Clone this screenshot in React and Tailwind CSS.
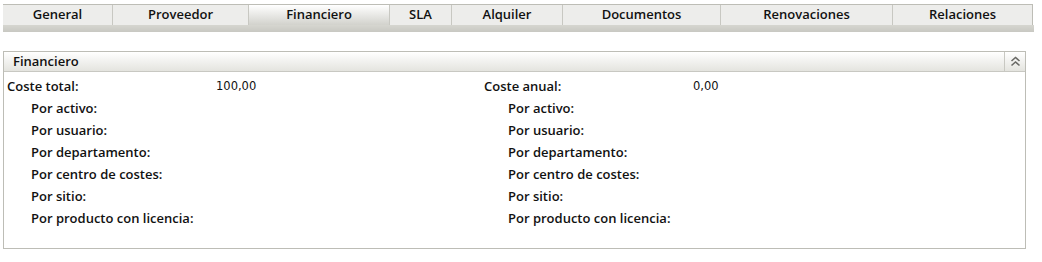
const tabs = [
  { name: "General", w: "w-[109px]" },
  { name: "Proveedor", w: "w-[136px]" },
  { name: "Financiero", w: "w-[141px]", active: true },
  { name: "SLA", w: "w-[62px]" },
  { name: "Alquiler", w: "w-[111px]" },
  { name: "Documentos", w: "w-[158px]" },
  { name: "Renovaciones", w: "w-[172px]" },
  { name: "Relaciones", w: "w-[140px]" },
];

const subRows = [
  "Por activo:",
  "Por usuario:",
  "Por departamento:",
  "Por centro de costes:",
  "Por sitio:",
  "Por producto con licencia:",
];

function CostColumn({ title, value }) {
  return (
    <div className="w-[477px] shrink-0">
      <div className="flex h-[22px] items-center">
        <span className="w-[209px] shrink-0">{title}</span>
        <span className="font-['DejaVu_Sans'] text-[11.5px] font-normal">{value}</span>
      </div>
      {subRows.map((r) => (
        <div key={r} className="flex h-[22px] items-center pl-[24px]">
          {r}
        </div>
      ))}
    </div>
  );
}

export default function App() {
  return (
    <div className="h-[262px] w-[1042px] bg-white font-['Open_Sans',sans-serif] text-[13px] font-semibold text-[#111]">
      {/* TABS */}
      <div className="pl-[3px] pt-[4px]">
        <div className="flex w-[1030px] border-t border-r border-[#bdbdb6]">
          {tabs.map((t, i) => (
            <div
              key={t.name}
              className={`${t.w} flex h-[20px] items-center justify-center text-[13px] ${
                i > 0 ? "border-l border-[#c8c8c2]" : ""
              } ${
                t.active
                  ? "bg-gradient-to-b from-white to-[#d2d2cc]"
                  : "bg-[#ededeb]"
              }`}
            >
              {t.name}
            </div>
          ))}
        </div>
        <div className="h-[7px] w-[1031px] bg-gradient-to-b from-[#d6d6d0] to-[#c8c8c2]"></div>
      </div>

      {/* PANEL */}
      <div className="ml-[3px] mt-[19px] w-[1023px] border border-[#bdbdb6]">
        <div className="flex h-[20px] items-stretch border-b border-[#c8c8c2] bg-gradient-to-b from-white to-[#e4e4df]">
          <div className="flex flex-1 items-center pl-[9px] text-[13px]">Financiero</div>
          <div className="flex w-[21px] items-center justify-center border-l border-[#c8c8c2]">
            <svg width="11" height="11" viewBox="0 0 11 11" fill="none" stroke="#6a6a66" strokeWidth="1.6">
              <path d="M1.5 5 L5.5 1.5 L9.5 5" />
              <path d="M1.5 9.5 L5.5 6 L9.5 9.5" />
            </svg>
          </div>
        </div>
        <div className="flex pl-[3px] pt-[4px] pb-[18px]">
          <CostColumn title="Coste total:" value="100,00" />
          <CostColumn title="Coste anual:" value="0,00" />
        </div>
      </div>
    </div>
  );
}
